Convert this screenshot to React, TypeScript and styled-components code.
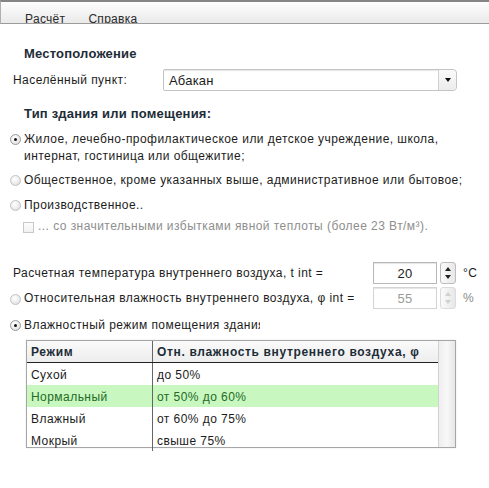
import React from 'react';
import styled, { createGlobalStyle } from 'styled-components';

const GlobalStyle = createGlobalStyle`
  html, body {
    margin: 0;
    padding: 0;
    background: #ffffff;
  }
  body {
    font-family: "Liberation Sans", Arial, sans-serif;
    font-size: 12px;
    letter-spacing: 0.45px;
    color: #1c1c1c;
  }
`;

const Page = styled.div`
  width: 489px;
  height: 488px;
  overflow: hidden;
  background: #fff;
`;

const MenuBar = styled.div`
  height: 21px;
  display: flex;
  padding-left: 12px;
  border-top: 2px solid #858585;
  border-bottom: 1px solid #9c9c9c;
  border-left: 1px solid #b0b0b0;
  background: linear-gradient(#fdfdfd, #eaeaea);
  overflow: hidden;
`;

const MenuItem = styled.div`
  padding: 10px 11px 0 12px;
  line-height: 14px;
  color: #2a2a2a;
  letter-spacing: 0.3px;
`;

const Content = styled.div`
  padding: 0 10px;
  display: flex;
  flex-direction: column;
`;

const SectionTitle = styled.div<{ $top: number }>`
  margin-top: ${p => p.$top}px;
  margin-left: 14px;
  font-size: 13px;
  font-weight: 700;
  line-height: 16px;
  letter-spacing: 0.2px;
  color: #1d2c37;
`;

const FieldRow = styled.div`
  margin-top: 7px;
  display: flex;
  align-items: center;
  height: 22px;
`;

const FieldLabel = styled.div`
  width: 150px;
  margin-left: 3px;
`;

const Select = styled.div`
  width: 292px;
  height: 20px;
  display: flex;
  border: 1px solid #c4c4c4;
  border-radius: 2px 4px 4px 2px;
  box-shadow: inset 0 1px 1px #e6e6e6;
  background: #fff;
`;

const SelectValue = styled.div`
  flex: 1;
  padding-left: 5px;
  line-height: 21px;
  font-size: 13px;
  letter-spacing: 0.2px;
`;

const SelectButton = styled.div`
  width: 17px;
  border-left: 1px solid #d0d0d0;
  background: linear-gradient(#fafafa, #ececec);
  display: flex;
  align-items: center;
  justify-content: center;
  border-radius: 0 4px 4px 0;
  &::after {
    content: '';
    border-left: 3px solid transparent;
    border-right: 3px solid transparent;
    border-top: 4px solid #111;
  }
`;

const RadioGroup = styled.div`
  margin-top: 9px;
  display: flex;
  flex-direction: column;
`;

const Option = styled.label<{ $gap: number; $muted?: boolean; $indent?: number }>`
  display: flex;
  align-items: flex-start;
  margin-top: ${p => p.$gap}px;
  margin-left: ${p => p.$indent || 0}px;
  line-height: 17px;
  color: ${p => (p.$muted ? '#8e8e8e' : '#1c1c1c')};
`;

const Radio = styled.span<{ $checked?: boolean }>`
  flex: none;
  width: 9px;
  height: 9px;
  margin: 3px 3px 0 0;
  border-radius: 50%;
  border: 1px solid ${p => (p.$checked ? '#9a9a9a' : '#c2c2c2')};
  background: radial-gradient(circle at 40% 35%, #ffffff 0%, #f0f0f0 45%, #d6d6d6 100%);
  display: flex;
  align-items: center;
  justify-content: center;
  &::after {
    content: '';
    display: ${p => (p.$checked ? 'block' : 'none')};
    width: 3px;
    height: 3px;
    border-radius: 50%;
    background: #111;
  }
`;

const CheckBox = styled.span`
  flex: none;
  width: 9px;
  height: 9px;
  margin: 4px 4px 0 0;
  border: 1px solid #c8c8c8;
  background: linear-gradient(#fdfdfd, #f0f0f0);
`;

const OptionText = styled.span<{ $clip?: number; $width?: number }>`
  ${p => (p.$width ? `width: ${p.$width}px;` : '')}
  ${p =>
    p.$clip
      ? `width: ${p.$clip}px; white-space: nowrap; overflow: hidden;`
      : ''}
`;

const SpinRow = styled.div<{ $gap: number }>`
  display: flex;
  align-items: center;
  height: 22px;
  margin-top: ${p => p.$gap}px;
`;

const SpinLabel = styled.div<{ $radio?: boolean }>`
  width: ${p => (p.$radio ? 363 : 360)}px;
  margin-left: ${p => (p.$radio ? 0 : 3)}px;
  display: flex;
  align-items: center;
  white-space: nowrap;
`;

const SpinInput = styled.div<{ $disabled?: boolean }>`
  width: 62px;
  height: 20px;
  border: 1px solid ${p => (p.$disabled ? '#d4d4d4' : '#b8b8b8')};
  box-shadow: inset 0 1px 1px #e4e4e4;
  text-align: center;
  line-height: 21px;
  font-size: 13px;
  letter-spacing: 0.2px;
  color: ${p => (p.$disabled ? '#9a9a9a' : '#1c1c1c')};
`;

const SpinArrows = styled.div<{ $disabled?: boolean }>`
  width: 14px;
  height: 20px;
  margin-left: 3px;
  border: 1px solid ${p => (p.$disabled ? '#dcdcdc' : '#bdbdbd')};
  border-radius: 3px;
  background: linear-gradient(to right, #fafafa, #e8e8e8);
  display: flex;
  flex-direction: column;
  align-items: center;
  justify-content: space-evenly;
`;

const Arrow = styled.span<{ $up?: boolean; $disabled?: boolean }>`
  border-left: 3px solid transparent;
  border-right: 3px solid transparent;
  ${p =>
    p.$up
      ? `border-bottom: 4px solid ${p.$disabled ? '#cfcfcf' : '#222'};`
      : `border-top: 4px solid ${p.$disabled ? '#cfcfcf' : '#222'};`}
`;

const Unit = styled.div<{ $disabled?: boolean }>`
  margin-left: 7px;
  color: ${p => (p.$disabled ? '#8a8a8a' : '#1c1c1c')};
`;

const Grid = styled.div`
  margin: 6px 0 0 16px;
  width: 428px;
  height: 106px;
  display: flex;
  border: 1px solid #a6a6a6;
  box-shadow: 0 0 1px #d0d0d0;
`;

const Table = styled.table`
  width: 411px;
  border-collapse: collapse;
  align-self: flex-start;
`;

const HeadCell = styled.th<{ $w?: number }>`
  ${p => (p.$w ? `width: ${p.$w}px;` : '')}
  height: 21px;
  padding: 0 0 0 4px;
  text-align: left;
  font-size: 12px;
  font-weight: 700;
  color: #1d2c37;
  letter-spacing: 0.65px;
  white-space: nowrap;
  background: linear-gradient(#fafafa, #ededed);
  border-bottom: 1px solid #222;
  border-right: 1px solid #666;
  &:last-child {
    border-right: none;
  }
`;

const Row = styled.tr<{ $hl?: boolean }>`
  background: ${p => (p.$hl ? '#c8f8c0' : 'transparent')};
`;

const Cell = styled.td<{ $hl?: boolean }>`
  height: 21px;
  padding: 1px 0 0 4px;
  line-height: 16px;
  color: ${p => (p.$hl ? '#246a24' : '#1c1c1c')};
  border-right: 1px solid #666;
  &:last-child {
    border-right: none;
  }
`;

const ScrollTrack = styled.div`
  flex: 1;
  border-left: 1px solid #d2d2d2;
  background: linear-gradient(to right, #eeeeee, #f8f8f8 50%, #e6e6e6);
`;

const modes = [
  { name: 'Сухой', value: 'до 50%' },
  { name: 'Нормальный', value: 'от 50% до 60%', hl: true },
  { name: 'Влажный', value: 'от 60% до 75%' },
  { name: 'Мокрый', value: 'свыше 75%' },
];

export default function App() {
  return (
    <Page>
      <GlobalStyle />
      <MenuBar>
        <MenuItem>Расчёт</MenuItem>
        <MenuItem>Справка</MenuItem>
      </MenuBar>
      <Content>
        <SectionTitle $top={22}>Местоположение</SectionTitle>
        <FieldRow>
          <FieldLabel>Населённый пункт:</FieldLabel>
          <Select>
            <SelectValue>Абакан</SelectValue>
            <SelectButton />
          </Select>
        </FieldRow>

        <SectionTitle $top={15}>Тип здания или помещения:</SectionTitle>
        <RadioGroup>
          <Option $gap={0}>
            <Radio $checked />
            <OptionText $width={430}>
              Жилое, лечебно-профилактическое или детское учреждение, школа, интернат, гостиница или общежитие;
            </OptionText>
          </Option>
          <Option $gap={7}>
            <Radio />
            <OptionText>Общественное, кроме указанных выше, административное или бытовое;</OptionText>
          </Option>
          <Option $gap={8}>
            <Radio />
            <OptionText>Производственное..</OptionText>
          </Option>
          <Option $gap={4} $indent={13} $muted>
            <CheckBox />
            <OptionText>... со значительными избытками явной теплоты (более 23 Вт/м³).</OptionText>
          </Option>
        </RadioGroup>

        <SpinRow $gap={27}>
          <SpinLabel>Расчетная температура внутреннего воздуха, t int =</SpinLabel>
          <SpinInput>20</SpinInput>
          <SpinArrows>
            <Arrow $up />
            <Arrow />
          </SpinArrows>
          <Unit>°C</Unit>
        </SpinRow>
        <SpinRow $gap={3}>
          <SpinLabel $radio>
            <Radio />
            Относительная влажность внутреннего воздуха, φ int =
          </SpinLabel>
          <SpinInput $disabled>55</SpinInput>
          <SpinArrows $disabled>
            <Arrow $up $disabled />
            <Arrow $disabled />
          </SpinArrows>
          <Unit $disabled>%</Unit>
        </SpinRow>
        <Option $gap={8}>
          <Radio $checked />
          <OptionText $clip={236}>Влажностный режим помещения здания</OptionText>
        </Option>

        <Grid>
          <Table>
            <thead>
              <tr>
                <HeadCell $w={121}>Режим</HeadCell>
                <HeadCell>Отн. влажность внутреннего воздуха, φ</HeadCell>
              </tr>
            </thead>
            <tbody>
              {modes.map(m => (
                <Row key={m.name} $hl={m.hl}>
                  <Cell $hl={m.hl}>{m.name}</Cell>
                  <Cell $hl={m.hl}>{m.value}</Cell>
                </Row>
              ))}
            </tbody>
          </Table>
          <ScrollTrack />
        </Grid>
      </Content>
    </Page>
  );
}
